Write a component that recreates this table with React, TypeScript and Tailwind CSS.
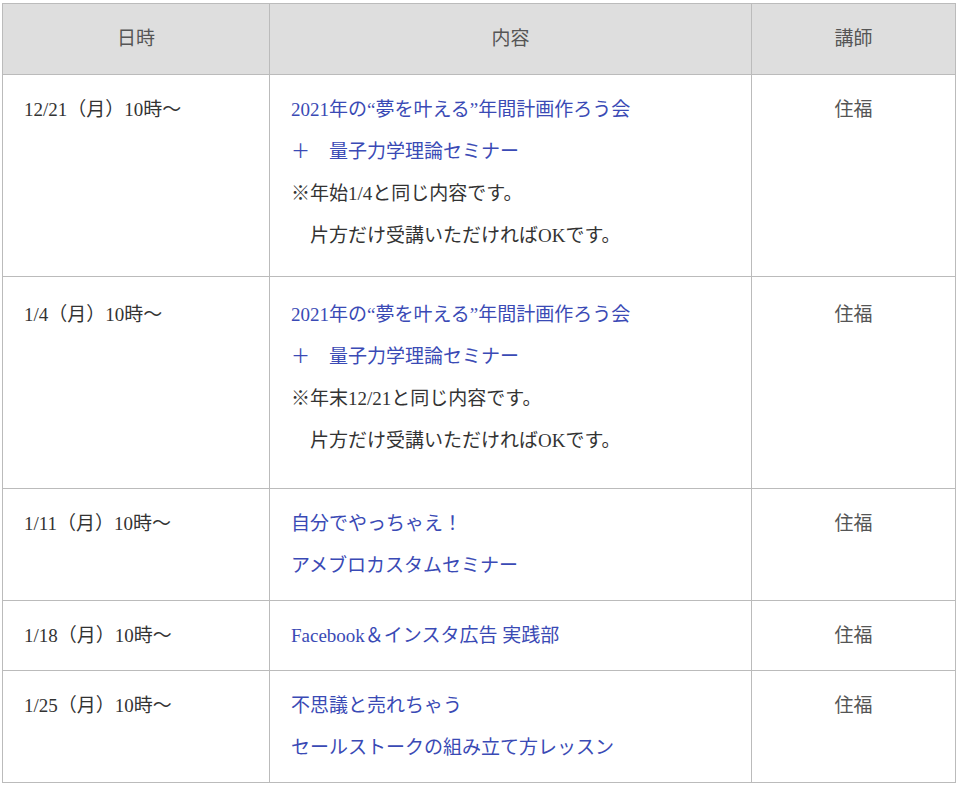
import React from "react";

type Row = {
  date: string;
  lines: { text: string; link?: boolean }[];
  teacher: string;
  h: string;
  pt: string;
};

const rows: Row[] = [
  {
    date: "12/21（月）10時～",
    lines: [
      { text: "2021年の“夢を叶える”年間計画作ろう会", link: true },
      { text: "＋　量子力学理論セミナー", link: true },
      { text: "※年始1/4と同じ内容です。" },
      { text: "　片方だけ受講いただければOKです。" },
    ],
    teacher: "住福",
    h: "h-[202px]",
    pt: "pt-[14px]",
  },
  {
    date: "1/4（月）10時～",
    lines: [
      { text: "2021年の“夢を叶える”年間計画作ろう会", link: true },
      { text: "＋　量子力学理論セミナー", link: true },
      { text: "※年末12/21と同じ内容です。" },
      { text: "　片方だけ受講いただければOKです。" },
    ],
    teacher: "住福",
    h: "h-[212px]",
    pt: "pt-[17px]",
  },
  {
    date: "1/11（月）10時～",
    lines: [
      { text: "自分でやっちゃえ！", link: true },
      { text: "アメブロカスタムセミナー", link: true },
    ],
    teacher: "住福",
    h: "h-[112px]",
    pt: "pt-[14px]",
  },
  {
    date: "1/18（月）10時～",
    lines: [{ text: "Facebook＆インスタ広告 実践部", link: true }],
    teacher: "住福",
    h: "h-[70px]",
    pt: "pt-[14px]",
  },
  {
    date: "1/25（月）10時～",
    lines: [
      { text: "不思議と売れちゃう", link: true },
      { text: "セールストークの組み立て方レッスン", link: true },
    ],
    teacher: "住福",
    h: "h-[112px]",
    pt: "pt-[14px]",
  },
];

export default function App() {
  return (
    <div
      className="w-[958px] h-[786px] bg-white pt-[3px] pl-[2px]"
      style={{ fontFamily: '"Liberation Serif", "Noto Sans CJK JP", serif' }}
    >
      <table className="border-collapse table-fixed w-[953px] text-[19px] text-[#333]">
        <colgroup>
          <col className="w-[267px]" />
          <col className="w-[482px]" />
          <col className="w-[204px]" />
        </colgroup>
        <thead>
          <tr className="h-[71px] bg-[#dedede] text-[#555]">
            <th className="border border-[#bbb] font-normal text-center align-middle">日時</th>
            <th className="border border-[#bbb] font-normal text-center align-middle">内容</th>
            <th className="border border-[#bbb] font-normal text-center align-middle">講師</th>
          </tr>
        </thead>
        <tbody>
          {rows.map((r, i) => (
            <tr key={i} className={r.h}>
              <td className={`border border-[#bbb] align-top pl-[21px] leading-[42px] ${r.pt}`}>
                {r.date}
              </td>
              <td className={`border border-[#bbb] align-top pl-[21px] leading-[42px] ${r.pt}`}>
                {r.lines.map((l, j) => (
                  <div key={j} className={l.link ? "text-[#3a4ab5] whitespace-pre" : "whitespace-pre"}>
                    {l.text}
                  </div>
                ))}
              </td>
              <td className={`border border-[#bbb] align-top text-center leading-[42px] text-[#555] ${r.pt}`}>
                {r.teacher}
              </td>
            </tr>
          ))}
        </tbody>
      </table>
    </div>
  );
}
